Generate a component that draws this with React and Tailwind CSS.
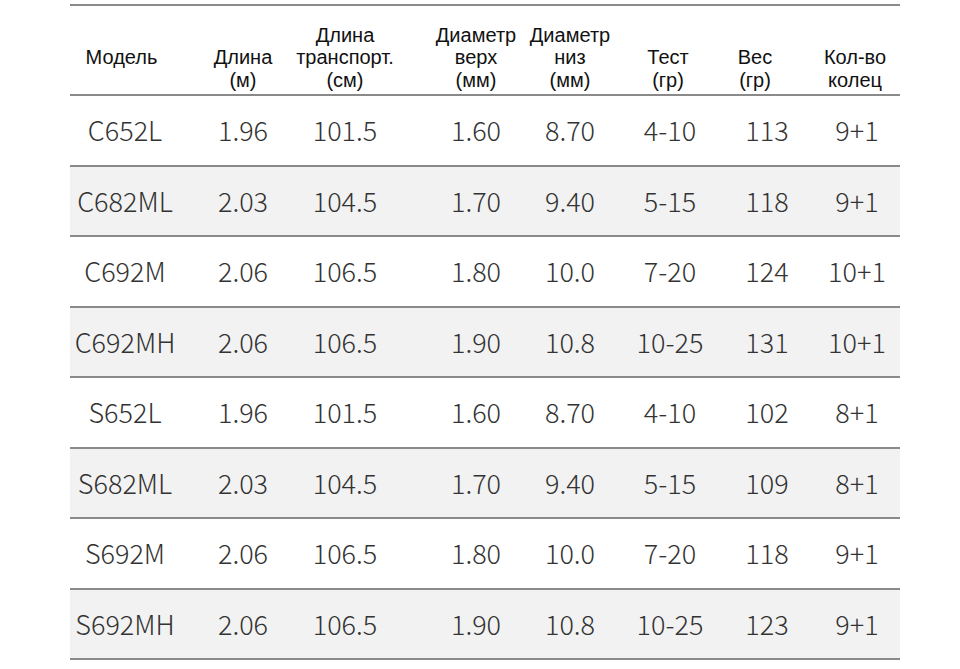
import React from "react";

const columns = [
  { w: "w-[114px]", head: ["", "Модель", ""], hPad: "pr-[11px]", dPad: "pr-[4px]" },
  { w: "w-[110px]", head: ["", "Длина", "(м)"], hPad: "pl-[8px]", dPad: "pl-[8px]" },
  { w: "w-[116px]", head: ["Длина", "транспорт.", "(см)"], hPad: "pr-[14px]", dPad: "pr-[14px]" },
  { w: "w-[112px]", head: ["Диаметр", "верх", "(мм)"], hPad: "pl-[20px]", dPad: "pl-[20px]" },
  { w: "w-[98px]", head: ["Диаметр", "низ", "(мм)"], hPad: "pr-[2px]", dPad: "pr-[2px]" },
  { w: "w-[98px]", head: ["", "Тест", "(гр)"], hPad: "pr-[2px]", dPad: "pl-[2px]" },
  { w: "w-[94px]", head: ["", "Вес", "(гр)"], hPad: "pr-[20px]", dPad: "pl-[4px]" },
  { w: "w-[88px]", head: ["", "Кол-во", "колец"], hPad: "pr-[2px]", dPad: "pl-[2px]" },
];

const rows = [
  ["C652L", "1.96", "101.5", "1.60", "8.70", "4-10", "113", "9+1"],
  ["C682ML", "2.03", "104.5", "1.70", "9.40", "5-15", "118", "9+1"],
  ["C692M", "2.06", "106.5", "1.80", "10.0", "7-20", "124", "10+1"],
  ["C692MH", "2.06", "106.5", "1.90", "10.8", "10-25", "131", "10+1"],
  ["S652L", "1.96", "101.5", "1.60", "8.70", "4-10", "102", "8+1"],
  ["S682ML", "2.03", "104.5", "1.70", "9.40", "5-15", "109", "8+1"],
  ["S692M", "2.06", "106.5", "1.80", "10.0", "7-20", "118", "9+1"],
  ["S692MH", "2.06", "106.5", "1.90", "10.8", "10-25", "123", "9+1"],
];

function HeaderRow() {
  return (
    <div className="flex h-[92px] items-end border-y-2 border-[#8a8a8a] pb-[3px] font-['Liberation_Sans',Arial,sans-serif] text-[20px] text-[#111]">
      {columns.map((col, i) => (
        <div key={i} className={`${col.w} ${col.hPad} flex flex-col items-center`}>
          {col.head.map((line, j) => (
            <div key={j} className="h-[22.5px] whitespace-nowrap leading-[22.5px]">
              {line}
            </div>
          ))}
        </div>
      ))}
    </div>
  );
}

function DataRow({ cells, shaded }) {
  return (
    <div
      className={`flex h-[70.5px] items-center border-b-2 border-[#8a8a8a] ${
        shaded ? "bg-[#f2f2f2]" : "bg-white"
      }`}
    >
      {cells.map((value, i) => (
        <div
          key={i}
          className={`${columns[i].w} ${columns[i].dPad} flex justify-center whitespace-nowrap`}
        >
          {value}
        </div>
      ))}
    </div>
  );
}

export default function App() {
  return (
    <div className="h-[669px] w-[960px] bg-white pt-[4px]">
      <div className="ml-[70px] w-[830px]">
        <HeaderRow />
        <div className="font-['Noto_Sans_CJK_SC',sans-serif] text-[27px] font-light text-[#333]">
          {rows.map((r, i) => (
            <DataRow key={i} cells={r} shaded={i % 2 === 1} />
          ))}
        </div>
      </div>
    </div>
  );
}
